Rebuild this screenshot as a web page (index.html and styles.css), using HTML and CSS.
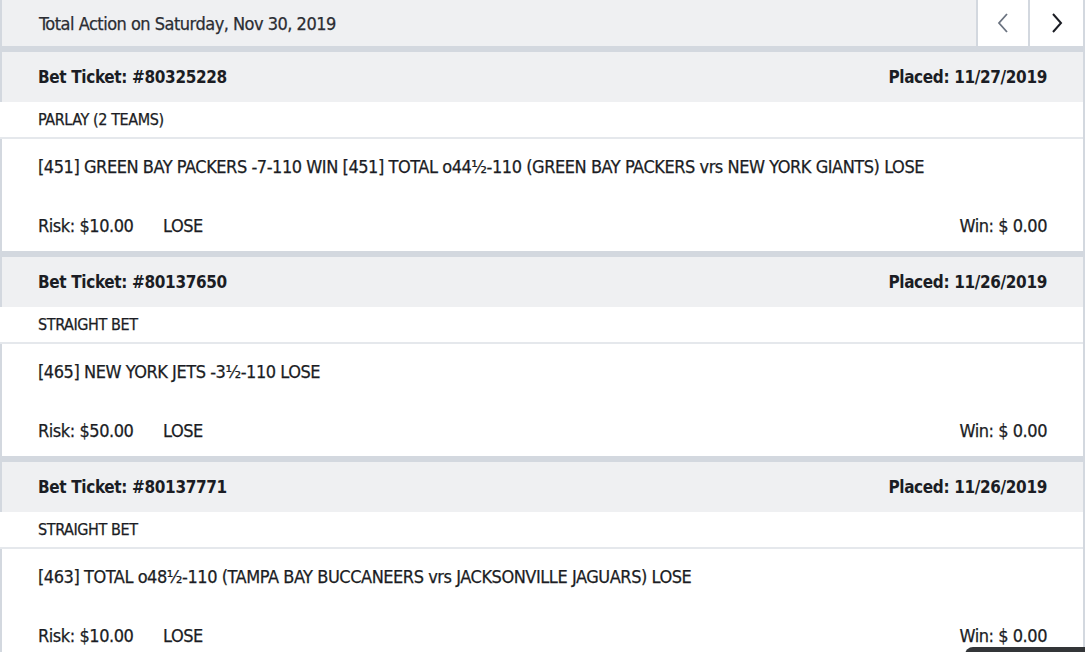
FILE: index.html
```html
<!DOCTYPE html>
<html>
<head>
<meta charset="utf-8">
<link rel="stylesheet" href="styles.css">
</head>
<body>
<div class="page">
  <div class="topbar">
    <div class="title">Total Action on Saturday, Nov 30, 2019</div>
    <button class="nav nav-prev" aria-label="Previous">
      <svg width="14" height="22" viewBox="0 0 14 22"><path d="M11 2 L3 11 L11 20" fill="none" stroke="currentColor" stroke-width="1.8"/></svg>
    </button>
    <button class="nav nav-next" aria-label="Next">
      <svg width="14" height="22" viewBox="0 0 14 22"><path d="M3 2 L11 11 L3 20" fill="none" stroke="currentColor" stroke-width="2"/></svg>
    </button>
  </div>

  <div class="ticket">
    <div class="ticket-head"><span>Bet Ticket: #80325228</span><span>Placed: 11/27/2019</span></div>
    <div class="ticket-type">PARLAY (2 TEAMS)</div>
    <div class="ticket-body">
      <div class="desc">[451] GREEN BAY PACKERS -7-110 WIN [451] TOTAL o44½-110 (GREEN BAY PACKERS vrs NEW YORK GIANTS) LOSE</div>
      <div class="amounts"><span class="risk">Risk: $10.00</span><span class="result">LOSE</span><span class="win">Win: $ 0.00</span></div>
    </div>
  </div>

  <div class="ticket">
    <div class="ticket-head"><span>Bet Ticket: #80137650</span><span>Placed: 11/26/2019</span></div>
    <div class="ticket-type">STRAIGHT BET</div>
    <div class="ticket-body">
      <div class="desc">[465] NEW YORK JETS -3½-110 LOSE</div>
      <div class="amounts"><span class="risk">Risk: $50.00</span><span class="result">LOSE</span><span class="win">Win: $ 0.00</span></div>
    </div>
  </div>

  <div class="ticket">
    <div class="ticket-head"><span>Bet Ticket: #80137771</span><span>Placed: 11/26/2019</span></div>
    <div class="ticket-type">STRAIGHT BET</div>
    <div class="ticket-body">
      <div class="desc">[463] TOTAL o48½-110 (TAMPA BAY BUCCANEERS vrs JACKSONVILLE JAGUARS) LOSE</div>
      <div class="amounts"><span class="risk">Risk: $10.00</span><span class="result">LOSE</span><span class="win">Win: $ 0.00</span></div>
    </div>
  </div>
  <div class="chat-tab"></div>
</div>
</body>
</html>
```

FILE: styles.css
```css
html, body {
  margin: 0;
  padding: 0;
  background: #ffffff;
  overflow: hidden;
}

.page {
  width: 1085px;
  height: 652px;
  box-sizing: border-box;
  background: #d3d8df;
  padding: 0 2px 0 2px;
  font-family: "DejaVu Sans Condensed", "Liberation Sans Narrow", "Liberation Sans", sans-serif;
  color: #1b1d24;
  -webkit-text-stroke: 0.25px currentColor;
  overflow: hidden;
  position: relative;
}

.topbar {
  display: flex;
  height: 46px;
  margin-bottom: 6px;
}

.title {
  flex: 1;
  background: #eff0f2;
  display: flex;
  align-items: center;
  padding-left: 37px;
  font-size: 18px;
  letter-spacing: -0.5px;
  color: #2b2d33;
}

.nav {
  border: 0;
  margin: 0;
  padding: 0;
  background: #ffffff;
  display: flex;
  align-items: center;
  justify-content: center;
}

.nav-prev { width: 50px; margin-left: 2px; color: #6b7380; }
.nav-next { width: 53px; margin-left: 2px; color: #1b1d24; }

.ticket {
  margin-bottom: 6px;
}

.ticket-head {
  height: 50px;
  background: #eff0f2;
  display: flex;
  align-items: center;
  justify-content: space-between;
  padding: 0 36px;
  font-weight: bold;
  font-size: 17px;
  letter-spacing: -0.35px;
  -webkit-text-stroke: 0;
}

.ticket-type {
  height: 35px;
  background: #ffffff;
  display: flex;
  align-items: center;
  margin-left: -2px;
  padding-left: 38px;
  font-size: 16px;
  letter-spacing: -0.4px;
  border-bottom: 2px solid #e5e8ec;
}

.ticket-body {
  height: 112px;
  background: #ffffff;
  padding: 0 36px;
  display: flex;
  flex-direction: column;
  font-size: 18px;
  letter-spacing: -0.45px;
}

.desc {
  margin-top: 16px;
  line-height: 24px;
}

.amounts {
  margin-top: auto;
  margin-bottom: 13px;
  display: flex;
  line-height: 24px;
}

.risk { width: 125px; }
.win { margin-left: auto; }

.chat-tab {
  position: absolute;
  left: 965px;
  top: 647px;
  width: 130px;
  height: 20px;
  background: #333538;
  border-radius: 8px;
}
```
